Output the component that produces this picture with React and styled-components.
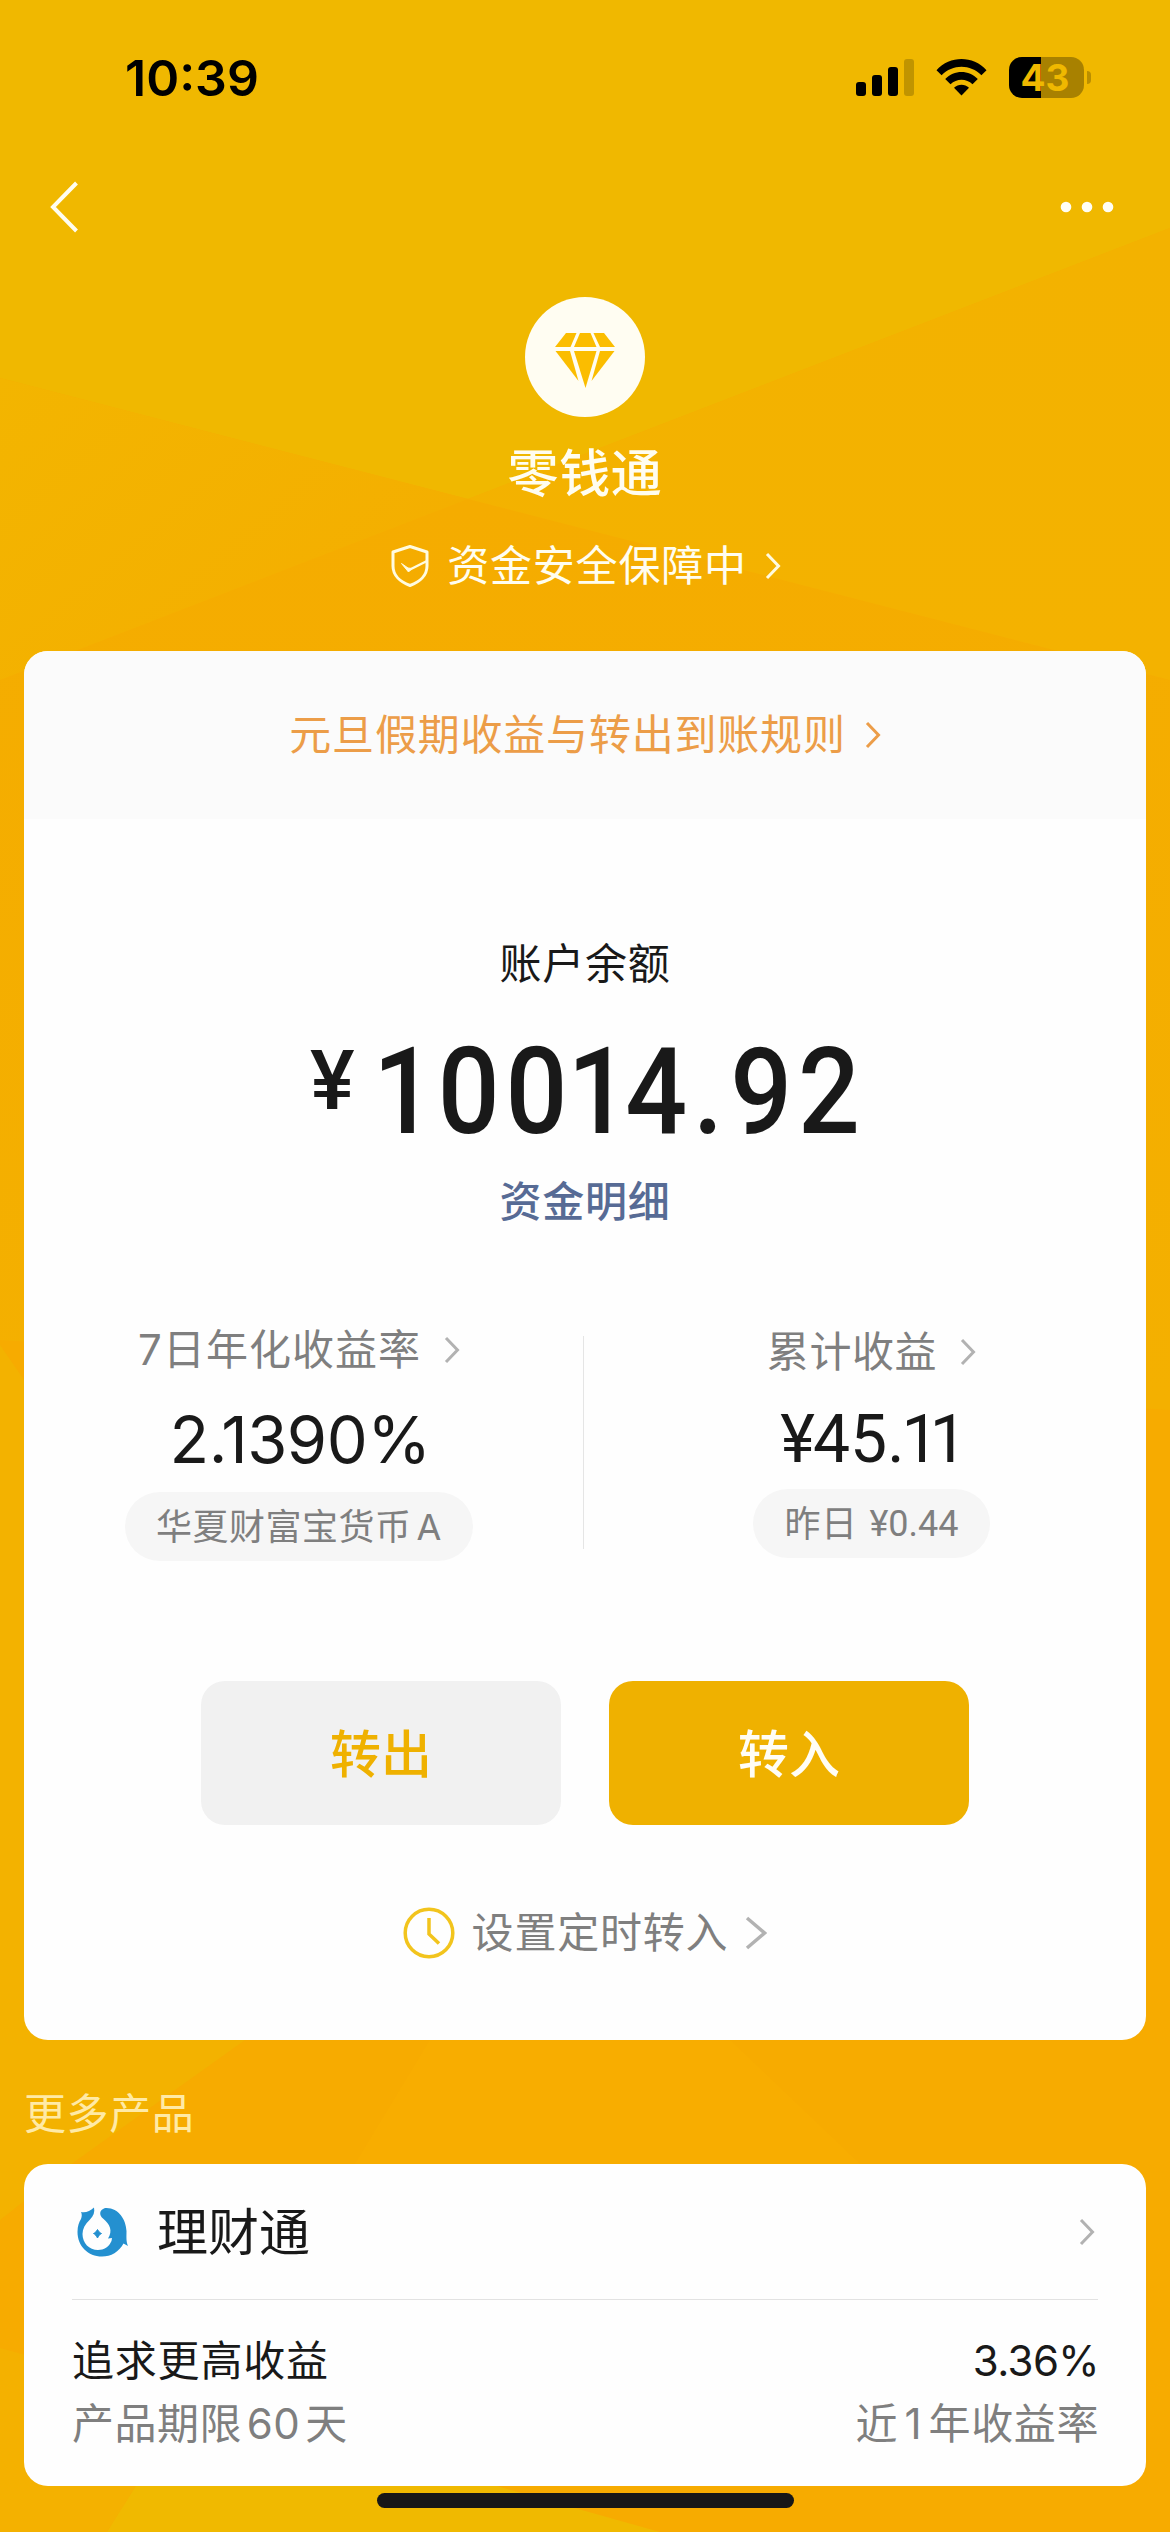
import React from "react";
import styled, { createGlobalStyle } from "styled-components";

const Global = createGlobalStyle`
  body { margin: 0; background: #f7ab00; }
  * { box-sizing: border-box; }
`;

const Screen = styled.main`
  position: relative;
  isolation: isolate;
  width: 1170px;
  height: 2532px;
  overflow: hidden;
  display: flex;
  flex-direction: column;
  font-family: Inter, "Noto Sans CJK SC", sans-serif;
  color: #191919;
  white-space: nowrap;
`;

const Backdrop = styled.svg`
  position: absolute;
  inset: 0;
  z-index: -1;
`;

const StatusBar = styled.header`
  height: 155px;
  padding: 57px 86px 0 125px;
  display: flex;
  justify-content: space-between;
  align-items: flex-start;
  color: #000;
`;

const Clock = styled.time`
  font-size: 50px;
  line-height: 42px;
  font-weight: 600;
`;

const StatusIcons = styled.div`
  display: flex;
  gap: 22px;
  height: 41px;
`;

const Battery = styled.div`
  position: relative;
  width: 75px;
  height: 41px;
  border-radius: 13px;
  background: linear-gradient(90deg, #000 32px, #a88100 32px);
  display: flex;
  align-items: center;
  justify-content: center;
  font-size: 37px;
  font-weight: 700;
  line-height: 41px;
  color: #efb800;
  padding-right: 3px;

  &::after {
    content: "";
    position: absolute;
    left: 78px;
    top: 14px;
    width: 4px;
    height: 13px;
    border-radius: 0 6px 6px 0;
    background: #b98e00;
  }
`;

const NavBar = styled.nav`
  height: 104px;
  padding: 0 56px 0 48px;
  display: flex;
  justify-content: space-between;
  align-items: center;
`;

const Hero = styled.section`
  height: 392px;
  padding-top: 38px;
  display: flex;
  flex-direction: column;
  align-items: center;
  color: #fffdf0;
`;

const Title = styled.h1`
  margin: 25px 0 0;
  font-size: 51px;
  font-weight: 500;
  line-height: 64px;
  letter-spacing: 0.6px;
`;

const Label = styled.span`
  font-size: 42px;
  line-height: 60px;
  letter-spacing: ${(p) => p.$spacing ?? "0.8px"};
  word-spacing: ${(p) => p.$word ?? "-8px"};
  font-weight: ${(p) => p.$weight ?? 400};
  color: ${(p) => p.$color ?? "inherit"};
`;

const SafeRow = styled.div`
  margin-top: 30px;
  padding-left: 2px;
  display: flex;
  align-items: center;
  gap: 18px;
`;

const Card = styled.section`
  margin: 0 24px;
  height: ${(p) => p.$height};
  border-radius: 24px;
  background: #fefefe;
  overflow: hidden;
  display: flex;
  flex-direction: column;
`;

const Notice = styled.div`
  height: 168px;
  background: #fbfbfb;
  color: #ec9d48;
  display: flex;
  align-items: center;
  justify-content: center;
  gap: 19px;
`;

const Balance = styled.div`
  padding-top: 115px;
  height: 517px;
  display: flex;
  flex-direction: column;
  align-items: center;
`;

const Amount = styled.div`
  display: flex;
  align-items: flex-start;
  margin-top: 38px;
  height: 119px;
  font-family: Roboto, sans-serif;
  font-weight: 500;
`;

const Currency = styled.span`
  font-size: 84px;
  line-height: 98px;
  margin-right: 18px;
`;

const Digits = styled.span`
  font-size: 121px;
  line-height: 120px;
  letter-spacing: 6.4px;
  transform: scaleX(0.9);
  transform-origin: left;
  margin-right: -60px;
`;

const Kern = styled.span`
  letter-spacing: ${(p) => p.$by};
`;

const DetailLink = styled(Label)`
  margin-top: 21px;
`;

const Stats = styled.div`
  display: grid;
  grid-template-columns: 559px 1px 1fr;
  align-items: start;
  height: 213px;
`;

const Rule = styled.div`
  height: 213px;
  background: #e5e5e5;
`;

const Stat = styled.div`
  display: flex;
  flex-direction: column;
  align-items: center;
  padding: ${(p) => p.$pad};
`;

const StatHead = styled.div`
  display: flex;
  align-items: center;
  height: ${(p) => p.$height ?? "30px"};
  gap: 23px;
  color: #7f7f7f;
`;

const StatValue = styled.div`
  margin-top: ${(p) => p.$top};
  padding-left: ${(p) => p.$shift ?? "0"};
  height: 80px;
  line-height: 80px;
  font-size: ${(p) => p.$size ?? "65px"};
  font-family: ${(p) => p.$font ?? "inherit"};
  letter-spacing: ${(p) => p.$spacing ?? "0"};
`;

const Pill = styled.div`
  margin-top: ${(p) => p.$top};
  width: ${(p) => p.$width};
  height: 69px;
  flex-shrink: 0;
  border-radius: 35px;
  background: #f6f6f6;
  color: #7f7f7f;
  font-size: 36px;
  line-height: 70px;
  display: flex;
  justify-content: center;
  gap: ${(p) => p.$gap};
  letter-spacing: 0.5px;
`;

const PillNumber = styled.span`
  font-family: Roboto, sans-serif;
  letter-spacing: 0;
`;

const Actions = styled.div`
  margin-top: 132px;
  display: flex;
  justify-content: center;
  gap: 48px;
`;

const Button = styled.button`
  width: 360px;
  height: 144px;
  padding: 3px 0 0;
  border: 0;
  border-radius: 24px;
  font: 500 51px/140px Inter, "Noto Sans CJK SC", sans-serif;
  color: ${(p) => (p.$primary ? "#fffdf5" : "#efb100")};
  background: ${(p) => (p.$primary ? "#efb100" : "#f1f1f1")};
`;

const Schedule = styled.div`
  margin-top: 78px;
  display: flex;
  align-items: center;
  justify-content: center;
  color: #7f7f7f;
  gap: 17px;
`;

const MoreTitle = styled.h2`
  margin: 0;
  height: 124px;
  padding: 44px 0 0 24px;
  font-size: 42px;
  font-weight: 400;
  line-height: 60px;
  letter-spacing: 0.6px;
  color: #ffeaa6;
`;

const ProductHead = styled.div`
  margin: 0 48px;
  height: 136px;
  flex-shrink: 0;
  border-bottom: 1px solid #e2e2e2;
  display: flex;
  align-items: center;
  padding: 0 3px 0 5px;
`;

const ProductName = styled.h3`
  flex: 1;
  margin: 2px 0 0 29px;
  font-size: 51px;
  font-weight: 400;
  line-height: 64px;
`;

const ProductRow = styled.div`
  margin: ${(p) => p.$top} 47px 0 48px;
  height: 60px;
  display: flex;
  justify-content: space-between;
`;

const HomeIndicator = styled.div`
  margin: 7px auto 0 377px;
  width: 417px;
  height: 15px;
  border-radius: 8px;
  background: #171717;
`;

function Chevron({ color, w = 16, h = 28, stroke = 3 }) {
  return (
    <svg width={w} height={h} viewBox={`0 0 ${w} ${h}`} fill="none" stroke={color} strokeWidth={stroke}>
      <path d={`M2 2L${w - 2.5} ${h / 2}L2 ${h - 2}`} />
    </svg>
  );
}

function Facets() {
  return (
    <Backdrop width="1170" height="2532" viewBox="0 0 1170 2532">
      <defs>
        <linearGradient id="left" x1="0" y1="378" x2="260" y2="680" gradientUnits="userSpaceOnUse">
          <stop offset="0" stopColor="#f3b500" />
          <stop offset="1" stopColor="#f4af00" />
        </linearGradient>
        <linearGradient id="right" x1="0" y1="228" x2="0" y2="683" gradientUnits="userSpaceOnUse">
          <stop offset="0" stopColor="#f3b200" />
          <stop offset="1" stopColor="#f4b200" />
        </linearGradient>
        <linearGradient id="middle" x1="0" y1="500" x2="0" y2="1400" gradientUnits="userSpaceOnUse">
          <stop offset="0" stopColor="#f5ac00" />
          <stop offset="1" stopColor="#f4b000" />
        </linearGradient>
      </defs>
      <rect width="1170" height="2532" fill="#f7ab00" />
      <path d="M0 680L468 499L1170 680V1410L0 1340Z" fill="url(#middle)" />
      <path d="M0 0H1170V228L468 499L0 378Z" fill="#f0b800" />
      <path d="M0 378L468 499L0 680Z" fill="url(#left)" />
      <path d="M1170 228V680L468 499Z" fill="url(#right)" />
      <path d="M0 1345L245 1700V2040L70 2165L0 2220Z" fill="#f3b200" />
      <path d="M430 2040L355 2164H860L730 2040Z" fill="#f8ad00" />
      <path d="M0 2348L190 2400L107 2532H0Z" fill="#f4b100" />
      <path d="M190 2400L660 2532H107Z" fill="#f0b900" />
    </Backdrop>
  );
}

export default function App() {
  return (
    <Screen>
      <Global />
      <Facets />
      <StatusBar>
        <Clock>10:39</Clock>
        <StatusIcons>
          <svg width="58" height="41" viewBox="0 0 58 41">
            <rect x="0" y="25" width="10" height="14" rx="3" />
            <rect x="16" y="18" width="10" height="21" rx="3" />
            <rect x="32" y="10" width="10" height="29" rx="3" />
            <rect x="48" y="2" width="10" height="37" rx="3" fill="#c09400" />
          </svg>
          <svg width="51" height="41" viewBox="0 0 51 41">
            <path d="M0.5 13.2C14 -1.7 37 -1.7 50.5 13.2L45.4 18.3C34.500 6.800 16.500 6.800 5.600 18.300Z" />
            <path d="M9.200 22C18 12.600 33 12.600 41.800 22L36.500 27.300C30.500 21.200 20.500 21.200 14.500 27.300Z" />
            <path d="M18 30.700C22.300 26.700 28.700 26.700 33 30.700L25.500 38.500Z" />
          </svg>
          <Battery>43</Battery>
        </StatusIcons>
      </StatusBar>
      <NavBar>
        <svg width="32" height="56" viewBox="0 0 32 56" fill="none" stroke="#fffdf0" strokeWidth="4">
          <path d="M28.500 4L5 28L28.500 52" />
        </svg>
        <svg width="54" height="12" viewBox="0 0 54 12" fill="#fffef5">
          <circle cx="6" cy="6" r="5.300" />
          <circle cx="27" cy="6" r="5.300" />
          <circle cx="48" cy="6" r="5.300" />
        </svg>
      </NavBar>
      <Hero>
        <svg width="120" height="120" viewBox="0 0 120 120">
          <circle cx="60" cy="60" r="60" fill="#fffdf2" />
          <g fill="#fbbd00">
            <path d="M41 36H51.500L45.500 50H30Z" />
            <path d="M55 36H65.500L71.500 50H49Z" />
            <path d="M68.500 36H79L90 50H75Z" />
            <path d="M30.500 54H45L53.500 84Z" />
            <path d="M49 54H71.500L60.500 91Z" />
            <path d="M75 54H89.500L66.500 84Z" />
          </g>
        </svg>
        <Title>零钱通</Title>
        <SafeRow>
          <svg width="38" height="44" viewBox="0 0 38 44" fill="none" stroke="#fffbe0" strokeWidth="3">
            <path d="M19 2.500L36 8V22C36 31 29 38 19 41.500C9 38 2 31 2 22V8Z" strokeLinejoin="round" />
            <path d="M18 26L36 17" strokeWidth="2.500" />
            <path d="M10.500 19.500L17 24L21 24.500L17.500 28Z" fill="#fffbe0" strokeWidth="1" />
          </svg>
          <Label>资金安全保障中</Label>
          <Chevron color="#fffbe0" />
        </SafeRow>
      </Hero>
      <Card $height="1389px">
        <Notice>
          <Label>元旦假期收益与转出到账规则</Label>
          <Chevron color="#ec9d48" />
        </Notice>
        <Balance>
          <Label>账户余额</Label>
          <Amount>
            <Currency>¥</Currency>
            <Digits>
              <Kern $by="3.3px">1</Kern>0<Kern $by="0px">0</Kern>
              <Kern $by="-4.4px">1</Kern>4<Kern $by="7.8px">.</Kern>92
            </Digits>
          </Amount>
          <DetailLink $color="#576b95" $weight={500}>资金明细</DetailLink>
        </Balance>
        <Stats>
          <Stat $pad="0 9px 0 0">
            <StatHead $height="28px">
              <Label $spacing="1px">7日年化收益率</Label>
              <Chevron color="#b2b2b2" />
            </StatHead>
            <StatValue $top="36px" $shift="2px" $spacing="-0.5px">2.1390%</StatValue>
            <Pill $top="12px" $width="348px" $gap="5px">
              <span>华夏财富宝货币</span>
              <span>A</span>
            </Pill>
          </Stat>
          <Rule />
          <Stat $pad="1px 0 0 13px">
            <StatHead>
              <Label $spacing="0.6px">累计收益</Label>
              <Chevron color="#b2b2b2" />
            </StatHead>
            <StatValue $top="33px" $size="66px" $shift="4px" $font="Roboto, sans-serif">
              <Kern $by="-2px">¥</Kern>45<Kern $by="-3px">.</Kern>
              <Kern $by="-9px">1</Kern>1
            </StatValue>
            <Pill $top="9px" $width="237px" $gap="12px">
              <span>昨日</span>
              <PillNumber>¥0.44</PillNumber>
            </Pill>
          </Stat>
        </Stats>
        <Actions>
          <Button>转出</Button>
          <Button $primary>转入</Button>
        </Actions>
        <Schedule>
          <svg width="52" height="52" viewBox="0 0 52 52" fill="none" stroke="#f2c41d" strokeWidth="3.500">
            <circle cx="26" cy="26" r="23.800" />
            <path d="M26 11V27L36 36.500" />
          </svg>
          <Label>设置定时转入</Label>
          <Chevron color="#b2b2b2" w={22} h={34} stroke={3.5} />
        </Schedule>
      </Card>
      <MoreTitle>更多产品</MoreTitle>
      <Card $height="322px">
        <ProductHead>
          <svg width="51" height="50" viewBox="0 0 51 50" fill="#2490d0">
            <path d="M4 5C9 6 13 4 17 0.500C18 5 16.500 9 13 12.500C8 17 5.500 22 5.500 27C5.500 36 12 43 21 43C27 43 32 40 34.500 34L35 31L31 31.500C36 24 33 17 26 11.500C22 8 22 3 28 1C41 0 49 12 49.500 24C49.500 30 49 34 51 39L46.500 36.500C42 45 34 49.500 25 49.500C11 49.500 0.500 39 0.500 25C0.500 19 2 15 4 12C5 9 5 7 4 5Z" />
            <path d="M20.500 22.500C22 25 22.500 25.500 24.500 26.500C22.500 27.500 22 28.500 20.500 31C19 28.500 18.500 27.500 16.500 26.500C18.500 25.500 19 25 20.500 22.500Z" stroke="#2490d0" />
          </svg>
          <ProductName>理财通</ProductName>
          <Chevron color="#b2b2b2" />
        </ProductHead>
        <ProductRow $top="31px">
          <Label>追求更高收益</Label>
          <Label $spacing="-0.6px">3.36%</Label>
        </ProductRow>
        <ProductRow $top="3px">
          <Label $color="#7f7f7f" $spacing="0.5px" $word="-7.5px">产品期限 60 天</Label>
          <Label $color="#7f7f7f" $spacing="0.6px" $word="-6px">近 1 年收益率</Label>
        </ProductRow>
      </Card>
      <HomeIndicator />
    </Screen>
  );
}
